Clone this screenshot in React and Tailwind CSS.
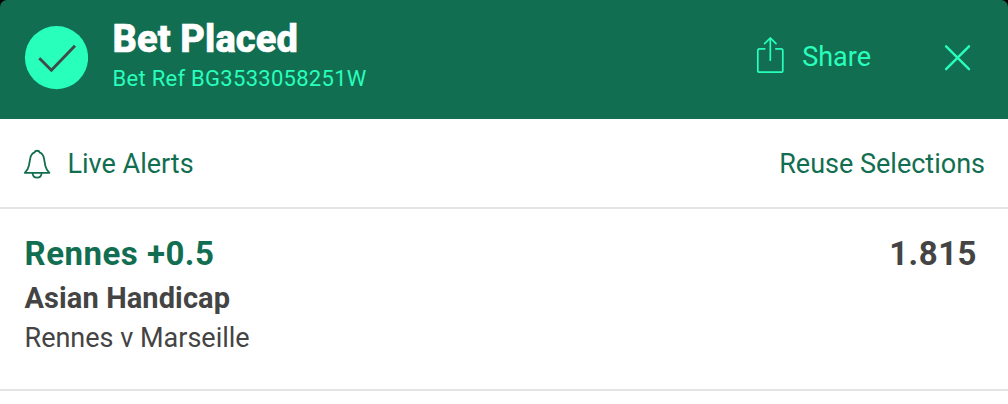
import React from 'react';

const bet = {
  ref: 'BG3533058251W',
  selection: 'Rennes +0.5',
  odds: '1.815',
  market: 'Asian Handicap',
  fixture: 'Rennes v Marseille',
};

const TickIcon = () => (
  <svg className="size-16 shrink-0" viewBox="0 0 64 64" fill="none">
    <circle cx="32.5" cy="31.6" r="31.6" fill="#28ffbb" />
    <path d="M15.3 32.2L27.4 44.2L51 19.8" stroke="#3f4a49" strokeWidth="2.9" />
  </svg>
);

const ShareIcon = () => (
  <svg className="w-7 h-10" viewBox="0 0 28 40" fill="none" stroke="#28ffbb" strokeWidth="1.7">
    <path d="M9.4 11.8H3.6Q1.8 11.8 1.8 13.6V33.4Q1.8 35.2 3.6 35.2H25Q26.8 35.2 26.8 33.4V13.6Q26.8 11.8 25 11.8H19.2" />
    <path d="M14.3 23.2V1.2M8.6 6.6L14.3 1L20 6.6" strokeLinecap="round" />
  </svg>
);

const CloseIcon = () => (
  <svg className="size-7" viewBox="0 0 28 28" fill="none" stroke="#28ffbb" strokeWidth="2.4" strokeLinecap="round">
    <path d="M2.1 3.3L25 26.2M25 3.3L2.1 26.2" />
  </svg>
);

const BellIcon = () => (
  <svg className="w-7 h-8" viewBox="0 0 28 32" fill="none" stroke="#126e51" strokeWidth="1.8" strokeLinejoin="round">
    <path d="M11.6 4.4C12 2.2 16.2 2.2 16.6 4.4C19.4 5.6 20.6 7.8 21 10.6L22.4 18C23 20.8 24.4 22.8 26.4 24.8H1.8C3.8 22.8 5.2 20.8 5.8 18L7.2 10.6C7.6 7.8 8.8 5.6 11.6 4.4Z" />
    <path d="M9.6 25C9.8 31.2 18.4 31.2 18.6 25" />
  </svg>
);

const App = () => {
  return (
    <div className="min-h-screen bg-white font-['Roboto',sans-serif] text-[#444444]">
      <div className="bg-black">
        <header className="flex h-[119px] justify-between rounded-t-[7px] bg-[#126e51] pl-6 pr-9">
          <div className="flex">
            <div className="pt-[26px]">
              <TickIcon />
            </div>
            <div className="ml-[24.5px] pt-[19px]">
              <h1 className="text-[38px] leading-10 font-extrabold tracking-[0.1px] text-white [-webkit-text-stroke:0.7px_white]">
                Bet Placed
              </h1>
              <p className="mt-1.5 text-[22px] leading-7 tracking-[0.28px] text-[#28ffbb]">Bet Ref {bet.ref}</p>
            </div>
          </div>
          <div className="flex h-[114px] items-center text-[#28ffbb]">
            <button className="flex items-center gap-[18px]">
              <ShareIcon />
              <span className="text-[27px] leading-9">Share</span>
            </button>
            <button className="ml-[73px]" aria-label="Close">
              <CloseIcon />
            </button>
          </div>
        </header>
      </div>

      <div className="flex h-[90px] items-center justify-between border-b-2 border-[#e4e4e4] pt-0.5 pl-[23px] pr-[23px] text-[27px] leading-9 text-[#126e51]">
        <button className="flex items-center gap-[16.5px]">
          <BellIcon />
          <span>Live Alerts</span>
        </button>
        <button>Reuse Selections</button>
      </div>

      <div className="h-[182px] border-b-2 border-[#e4e4e4] pl-[24.5px] pr-[31px] pt-[25px]">
        <div className="flex justify-between text-[33px] leading-10 font-bold tracking-[0.5px]">
          <span className="text-[#126e51]">{bet.selection}</span>
          <span>{bet.odds}</span>
        </div>
        <div className="mt-1 text-[29px] leading-10 font-bold tracking-[0.1px]">{bet.market}</div>
        <div className="mt-0.5 text-[27px] leading-9">{bet.fixture}</div>
      </div>
    </div>
  );
};

export default App;
